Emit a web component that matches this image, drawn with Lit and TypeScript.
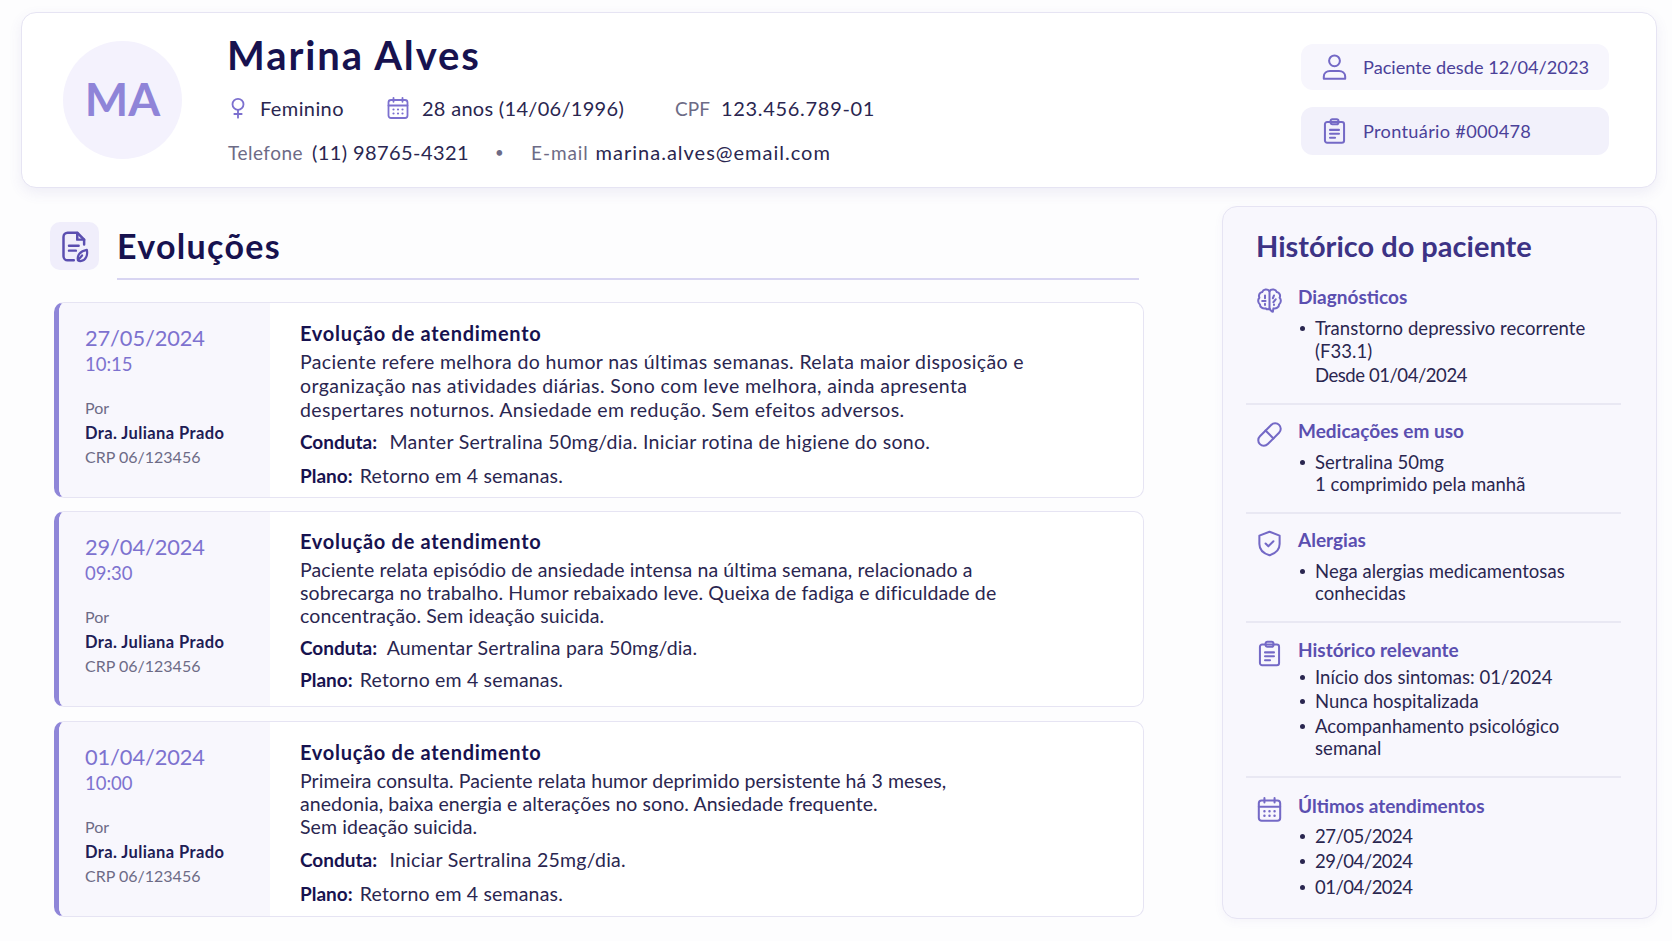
import { LitElement, html, css, svg } from "lit";
import { customElement } from "lit/decorators.js";

const icon = (body: unknown, cls = "") => html`<svg class="ic ${cls}" viewBox="0 0 24 24" fill="none" stroke="currentColor" stroke-width="1.8" stroke-linecap="round" stroke-linejoin="round">${body}</svg>`;

const icons = {
  venus: svg`<circle cx="12" cy="8" r="6"/><path d="M12 14v8.500M8 18.500h8"/>`,
  calendar: svg`<rect x="2.500" y="4" width="19" height="18" rx="2.500"/><path d="M7.500 1.800v4M16.500 1.800v4M2.500 9.500h19"/><path d="M7.500 13.500h.01M12 13.500h.01M16.500 13.500h.01M7.500 17.500h.01M12 17.500h.01M16.500 17.500h.01" stroke-width="2.200"/>`,
  user: svg`<circle cx="12" cy="6.500" r="4.800"/><path d="M2.500 22.500v-2c0-3 2.500-5 5.500-5h8c3 0 5.500 2 5.500 5v2Z"/>`,
  clipboard: svg`<rect x="3.500" y="4" width="17" height="18.500" rx="2"/><rect x="8.500" y="1.500" width="7" height="4.500" rx="1.600"/><path d="M8 11h8M8 14.500h8M8 18h4.500"/>`,
  file: svg`<path d="M19 10.500V7l-5-5H7a3 3 0 0 0-3 3v14a3 3 0 0 0 3 3h4.500"/><path d="M14 2.200V7h5"/><path d="M8 11.500h7M8 15h5"/><path d="M14.500 22c-.8-3.500 1.500-6.500 6.500-7.500.8 4-1 7.500-4 8-1 .2-1.800 0-2.500-.5Zm0 0 3-3.500" stroke-width="1.600"/>`,
  brain: svg`<path d="M12 3.500C10 1.500 6.500 2 5.500 4.500 3 5 2 7.500 3 9.500 1.500 11 1.500 14 3.500 15.500c0 2.500 2.500 4 5 3.500 1 .8 2.500 1 3.500.5"/><path d="M12 3.500c2-2 5.500-1.500 6.500 1 2.500.5 3.500 3 2.500 5 1.500 1.500 1.500 4.500-.5 6 0 2.500-2.500 4-5 3.500-.3 1.200-.3 2-.5 3-1.200-.2-2.500-1.500-3-3"/><path d="M12 3.500v16"/><path d="M8 7.500v2.500M5.500 12.500h3M8 15v1M16 7.500l-1 2.500M15.500 13.500l2-2.500M16 16v-.5"/>`,
  pill: svg`<path d="m10.500 20.500 10-10a4.950 4.950 0 1 0-7-7l-10 10a4.950 4.950 0 1 0 7 7Z"/><path d="m8.500 8.500 7 7"/>`,
  shield: svg`<path d="M12 1.500 21 5v7.500c0 5-4 8.500-9 10-5-1.500-9-5-9-10V5Z"/><path d="m8.500 12 2.500 2.500 4.500-4.500"/>`,
};

interface Evo { date: string; time: string; body: string[]; conduta: string; plano: string; }

const evos: Evo[] = [
  { date: "27/05/2024", time: "10:15", body: ["Paciente refere melhora do humor nas últimas semanas. Relata maior disposição e", "organização nas atividades diárias. Sono com leve melhora, ainda apresenta", "despertares noturnos. Ansiedade em redução. Sem efeitos adversos."], conduta: "Manter Sertralina 50mg/dia. Iniciar rotina de higiene do sono.", plano: "Retorno em 4 semanas." },
  { date: "29/04/2024", time: "09:30", body: ["Paciente relata episódio de ansiedade intensa na última semana, relacionado a", "sobrecarga no trabalho. Humor rebaixado leve. Queixa de fadiga e dificuldade de", "concentração. Sem ideação suicida."], conduta: "Aumentar Sertralina para 50mg/dia.", plano: "Retorno em 4 semanas." },
  { date: "01/04/2024", time: "10:00", body: ["Primeira consulta. Paciente relata humor deprimido persistente há 3 meses,", "anedonia, baixa energia e alterações no sono. Ansiedade frequente.", "Sem ideação suicida."], conduta: "Iniciar Sertralina 25mg/dia.", plano: "Retorno em 4 semanas." },
];

const hist = [
  { icon: icons.brain, title: "Diagnósticos", items: [["Transtorno depressivo recorrente", "(F33.1)"], ["Desde 01/04/2024"]], nobullet: [false, true] },
  { icon: icons.pill, title: "Medicações em uso", items: [["Sertralina 50mg", "1 comprimido pela manhã"]] },
  { icon: icons.shield, title: "Alergias", items: [["Nega alergias medicamentosas", "conhecidas"]] },
  { icon: icons.clipboard, title: "Histórico relevante", cls: "tight", items: [["Início dos sintomas: 01/2024"], ["Nunca hospitalizada"], ["Acompanhamento psicológico", "semanal"]] },
  { icon: icons.calendar, title: "Últimos atendimentos", cls: "dates", items: [["27/05/2024"], ["29/04/2024"], ["01/04/2024"]] },
];

@customElement("app-root")
export class AppRoot extends LitElement {
  static styles = css`
    :host { display: block; width: 1672px; height: 941px; overflow: hidden; background: #fdfdfe; font-family: "Lato", "Noto Sans", sans-serif; color: #2a2650; box-sizing: border-box; padding: 12px 15px 0 21px; }
    * { box-sizing: border-box; }
    .ic { display: block; flex: none; }
    .head { height: 176px; background: #fff; border: 1px solid #e6e4f3; border-radius: 15px; box-shadow: 0 5px 14px rgba(90, 80, 170, .09); display: flex; align-items: flex-start; padding: 28px 47px 0 41px; }
    .avatar { width: 119px; height: 118px; border-radius: 50%; background: #f4f2fd; color: #8f84d8; font-size: 46px; font-weight: 700; display: flex; align-items: center; justify-content: center; flex: none; margin-right: 45px; padding-bottom: 4px; }
    .who { flex: 1; margin-top: -11px; padding-left: 1px; }
    h1 { margin: 0 0 0 -1px; font-size: 40px; line-height: 50px; font-weight: 700; color: #17124f; letter-spacing: 1.900px; }
    .r { display: flex; align-items: center; font-size: 20px; height: 24px; color: #2a2650; white-space: nowrap; letter-spacing: .4px; }
    .r1 { margin-top: 16px; }
    .r2 { margin-top: 20px; }
    .lab { color: #6d6b86; font-size: 19px; margin-right: 9px; letter-spacing: .5px; }
    .lab.tight { letter-spacing: 0; margin-right: 11px; }
    .lab.wide { letter-spacing: .9px; margin-right: 7px; }
    .wide-v { letter-spacing: 1px; }
    .mid-v { letter-spacing: .7px; }
    .r .ic { color: #7c70cf; width: 22px; height: 26px; }
    .r1 .i1 { margin-right: 11px; margin-left: -1px; stroke-width: 2; }
    .r1 .gap1 { margin-right: 42px; }
    .r1 .cal { width: 24px; height: 24px; margin-right: 12px; }
    .r1 .gap2 { margin-right: 51px; letter-spacing: .3px; }
    .dot { margin: 0 27px 0 26px; color: #6d6b86; font-size: 15px; }
    .pills { width: 308px; margin-top: 3px; display: flex; flex-direction: column; gap: 17px; flex: none; }
    .pill { height: 46px; border-radius: 12px; background: #f7f6fd; color: #4b4199; font-size: 18.200px; display: flex; align-items: center; padding-left: 20px; gap: 15px; }
    .pill + .pill { height: 48px; background: #f2f1fb; letter-spacing: .3px; }
    .pill .ic { width: 27px; height: 28px; color: #7469c6; }
    .main { display: flex; align-items: flex-start; margin-top: 18px; }
    .left { width: 1124px; flex: none; margin-left: 29px; margin-right: 48px; }
    .sec-h { display: flex; align-items: flex-start; height: 78px; }
    .sec-ic { width: 49px; height: 48px; border-radius: 10px; background: #f0eefb; color: #5a4eb0; display: flex; align-items: center; justify-content: center; margin-top: 16px; margin-right: 18px; flex: none; }
    .sec-ic .ic { width: 33px; height: 33px; }
    .sec-t { width: 1022px; height: 74px; border-bottom: 2px solid #d8d5f2; font-size: 34px; font-weight: 700; color: #17124f; line-height: 48px; padding-top: 16px; letter-spacing: 1.300px; }
    .cards { display: flex; flex-direction: column; gap: 13px; margin-top: 18px; padding-left: 4px; margin-right: -4px; width: 1094px; }
    .card { height: 196px; flex: none; display: flex; border: 1px solid #e6e4f3; border-left: 5px solid #8f86d8; border-radius: 10px; background: #fff; overflow: hidden; }
    .card:nth-child(3) { margin-top: 1px; }
    .meta { width: 211px; flex: none; background: #f8f7fd; padding: 21px 0 0 26px; }
    .date { font-size: 21.800px; line-height: 28px; color: #7d72cf; letter-spacing: -.1px; }
    .time { font-size: 18.500px; line-height: 24px; color: #7d72cf; }
    .por { font-size: 16px; line-height: 24px; color: #6d6b86; margin-top: 20px; }
    .dr { font-size: 16.500px; line-height: 24px; font-weight: 700; color: #211c55; letter-spacing: .4px; margin-top: 1px; }
    .crp { font-size: 16px; line-height: 24px; color: #6d6b86; }
    .body { padding: 17px 0 0 30px; font-size: 19.500px; letter-spacing: .37px; color: #2a2650; white-space: nowrap; }
    .body h3 { margin: 0 0 4px; font-size: 20px; line-height: 26px; font-weight: 700; color: #17124f; letter-spacing: .7px; }
    .txt { line-height: 24px; }
    .l { margin-top: 8px; line-height: 24px; letter-spacing: .3px; }
    .l + .l { margin-top: 10px; letter-spacing: .17px; }
    b { color: #17124f; font-weight: 700; letter-spacing: 0; font-size: 19px; margin-right: 7px; }
    .l + .l b { margin-right: 2px; }
    .card:nth-child(2) .body { padding-top: 16px; }
    .card:nth-child(2) .txt { line-height: 23px; letter-spacing: .12px; }
    .card:nth-child(3) .txt { line-height: 23px; letter-spacing: .08px; }
    .card:nth-child(2) .l { margin-top: 9px; letter-spacing: .18px; }
    .card:nth-child(2) .l + .l { margin-top: 8px; }
    .card:nth-child(2) .l b { margin-right: 5px; }
    .card:nth-child(2) .l + .l b { margin-right: 2px; }
    .card:nth-child(3) .l { margin-top: 10px; letter-spacing: .26px; }
    .card:nth-child(3) .l + .l { letter-spacing: .17px; }
    .hist { width: 435px; height: 713px; flex: none; background: #f8f7fd; border: 1px solid #e6e4f3; border-radius: 15px; box-shadow: 0 3px 10px rgba(90, 80, 170, .05); padding: 19px 35px 0 23px; }
    .hist h2 { margin: 0 0 19px 10px; font-size: 29px; line-height: 40px; font-weight: 700; color: #3d3385; }
    .sec { display: flex; gap: 15px; padding: 0 0 16px 10px; margin-bottom: 14px; border-bottom: 2px solid #e9e8f3; }
    .sec:last-child { border-bottom: 0; }
    .sec > .ic { width: 27px; height: 27px; color: #7469c6; margin-top: 2px; }
    .sec h4 { margin: 0; font-size: 19px; line-height: 24px; font-weight: 700; color: #5b4fb0; }
    ul { margin: 8px 0 0; padding: 0; list-style: none; font-size: 18.500px; letter-spacing: .05px; line-height: 22.500px; color: #2a2650; }
    .sec.tight { margin-top: 15px; margin-bottom: 16px; }
    .sec.tight ul { margin-top: 4px; }
    .sec.dates ul { margin-top: 7px; letter-spacing: -.5px; }
    .sec.dates li { margin-top: 3px; }
    li { position: relative; padding-left: 17px; white-space: nowrap; margin-top: 2px; }
    li.plain { letter-spacing: -.45px; }
    li.bul::before { content: ""; position: absolute; left: 2px; top: 9px; width: 5px; height: 5px; border-radius: 50%; background: #2a2650; }
  `;

  render() {
    return html`
      <div class="head">
        <div class="avatar">MA</div>
        <div class="who">
          <h1>Marina Alves</h1>
          <div class="r r1">
            ${icon(icons.venus, "i1")}<span class="gap1">Feminino</span>
            ${icon(icons.calendar, "cal")}<span class="gap2">28 anos (14/06/1996)</span>
            <span class="lab tight">CPF</span><span class="mid-v">123.456.789-01</span>
          </div>
          <div class="r r2">
            <span class="lab">Telefone</span><span>(11) 98765-4321</span>
            <span class="dot">•</span>
            <span class="lab wide">E-mail</span><span class="wide-v">marina.alves@email.com</span>
          </div>
        </div>
        <div class="pills">
          <div class="pill">${icon(icons.user)}Paciente desde 12/04/2023</div>
          <div class="pill">${icon(icons.clipboard)}Prontuário #000478</div>
        </div>
      </div>
      <div class="main">
        <div class="left">
          <div class="sec-h">
            <div class="sec-ic">${icon(icons.file)}</div>
            <div class="sec-t">Evoluções</div>
          </div>
          <div class="cards">
            ${evos.map((e) => html`
              <div class="card">
                <div class="meta">
                  <div class="date">${e.date}</div>
                  <div class="time">${e.time}</div>
                  <div class="por">Por</div>
                  <div class="dr">Dra. Juliana Prado</div>
                  <div class="crp">CRP 06/123456</div>
                </div>
                <div class="body">
                  <h3>Evolução de atendimento</h3>
                  <div class="txt">${e.body.map((t) => html`<div>${t}</div>`)}</div>
                  <div class="l"><b>Conduta:</b> ${e.conduta}</div>
                  <div class="l"><b>Plano:</b> ${e.plano}</div>
                </div>
              </div>`)}
          </div>
        </div>
        <div class="hist">
          <h2>Histórico do paciente</h2>
          ${hist.map((s) => html`
            <div class="sec ${s.cls ?? ""}">
              ${icon(s.icon)}
              <div>
                <h4>${s.title}</h4>
                <ul>
                  ${s.items.map((it, i) => html`<li class=${s.nobullet?.[i] ? "plain" : "bul"}>${it.map((t) => html`<div>${t}</div>`)}</li>`)}
                </ul>
              </div>
            </div>`)}
        </div>
      </div>
    `;
  }
}
